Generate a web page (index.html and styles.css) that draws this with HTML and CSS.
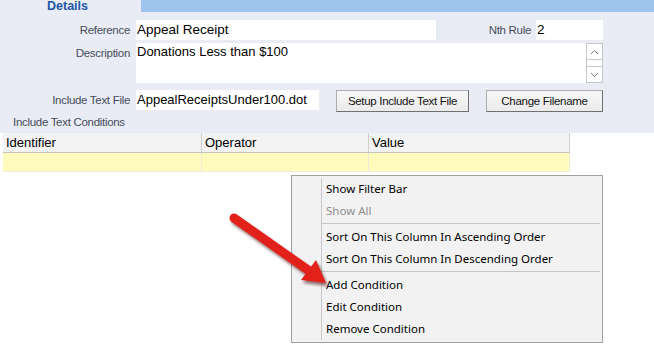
FILE: index.html
```html
<!DOCTYPE html>
<html lang="en">

<head>
    <meta charset="UTF-8" />
    <title>Details</title>
    <link rel="stylesheet" href="styles.css">
</head>

<body>
    <div class="panel">
        <div class="tabbar">
            <div class="tab">Details</div>
            <div class="tabline"></div>
        </div>

        <div class="row row-ref">
            <label class="lbl">Reference</label>
            <div class="field f-ref">Appeal Receipt</div>
            <label class="lbl lbl-nth">Nth Rule</label>
            <div class="field f-nth">2</div>
        </div>

        <div class="row row-desc">
            <label class="lbl">Description</label>
            <div class="field f-desc">
                <span>Donations Less than $100</span>
                <div class="scroll">
                    <div class="sbtn">
                        <svg width="9" height="6" viewBox="0 0 9 6"><path d="M1 5 L4.5 1.5 L8 5" fill="none" stroke="#7a7a7a" stroke-width="1" /></svg>
                    </div>
                    <div class="strack"></div>
                    <div class="sbtn">
                        <svg width="9" height="6" viewBox="0 0 9 6"><path d="M1 1 L4.5 4.5 L8 1" fill="none" stroke="#7a7a7a" stroke-width="1" /></svg>
                    </div>
                </div>
            </div>
        </div>

        <div class="row row-file">
            <label class="lbl">Include Text File</label>
            <div class="field f-file">AppealReceiptsUnder100.dot</div>
            <button class="btn btn-setup">Setup Include Text File</button>
            <button class="btn btn-change">Change Filename</button>
        </div>

        <div class="section">Include Text Conditions</div>
    </div>

    <div class="grid">
        <div class="grid-head">
            <div class="col c1">Identifier</div>
            <div class="col c2">Operator</div>
            <div class="col c3">Value</div>
        </div>
        <div class="grid-row">
            <div class="col c1"></div>
            <div class="col c2"></div>
            <div class="col c3"></div>
        </div>
    </div>

    <!-- context menu -->
    <div class="menu">
        <div class="item">Show Filter Bar</div>
        <div class="item disabled">Show All</div>
        <div class="sep"></div>
        <div class="item">Sort On This Column In Ascending Order</div>
        <div class="item">Sort On This Column In Descending Order</div>
        <div class="sep"></div>
        <div class="item">Add Condition</div>
        <div class="item">Edit Condition</div>
        <div class="item">Remove Condition</div>
    </div>

    <svg class="arrow" width="120" height="90" viewBox="220 205 120 90">
        <defs>
            <filter id="blur" x="-20%" y="-20%" width="140%" height="140%">
                <feGaussianBlur stdDeviation="1.5" />
            </filter>
        </defs>
        <g transform="translate(2 3)" opacity="0.55" filter="url(#blur)">
            <line x1="234" y1="218" x2="308" y2="270" stroke="#400" stroke-width="9" stroke-linecap="round" />
            <polygon points="326,283 301,280 316,260" fill="#400" />
        </g>
        <line x1="234" y1="218" x2="308" y2="270" stroke="#e3211b" stroke-width="9" stroke-linecap="round" />
        <polygon points="326,283 301,280 316,260" fill="#e3211b" />
    </svg>
</body>

</html>
```

FILE: styles.css
```css
* {
    box-sizing: border-box;
}

html,
body {
    margin: 0;
    padding: 0;
    background: #fff;
    font-family: 'Liberation Sans', Arial, sans-serif;
}

body {
    position: relative;
    width: 654px;
    height: 348px;
    overflow: hidden;
}

.panel {
    background: #e9ecf4;
    height: 133px;
}

.tabbar {
    display: flex;
    height: 12px;
}

.tab {
    width: 141px;
    padding-left: 47px;
    font-size: 12.5px;
    font-weight: bold;
    color: #2257a8;
    line-height: 13px;
}

.tabline {
    flex: 1;
    background: #9fc5ef;
}

.row {
    display: flex;
    align-items: flex-start;
}

.lbl {
    width: 130px;
    text-align: right;
    font-size: 11.5px;
    color: #474c5c;
    letter-spacing: -0.3px;
    line-height: 20px;
    margin-right: 6px;
}

.field {
    background: #fff;
    height: 20px;
    font-size: 13.5px;
    line-height: 20px;
    color: #000;
    padding-left: 1px;
}

.row-ref {
    margin-top: 8px;
}

.f-ref {
    width: 300px;
}

.lbl-nth {
    width: 95px;
    margin-right: 5px;
}

.f-nth {
    width: 67px;
}

.row-desc {
    margin-top: 3px;
}

.f-desc {
    width: 467px;
    height: 40px;
    display: flex;
    justify-content: space-between;
    font-size: 13px;
}

.f-desc span {
    line-height: 18px;
}

.scroll {
    width: 17px;
    height: 40px;
    display: flex;
    flex-direction: column;
}

.sbtn {
    height: 17px;
    border: 1px solid #c8c8c8;
    background: #fff;
    display: flex;
    align-items: center;
    justify-content: center;
}

.strack {
    flex: 1;
    border-left: 1px solid #c8c8c8;
    border-right: 1px solid #c8c8c8;
}

.row-file {
    margin-top: 7px;
}

.f-file {
    width: 183px;
    font-size: 13px;
}

.btn {
    height: 22px;
    font-family: 'Liberation Sans', Arial, sans-serif;
    font-size: 11.5px;
    letter-spacing: -0.3px;
    color: #111;
    background: linear-gradient(#f7f7f7, #ebebeb);
    border: 1px solid #adadad;
    border-right-color: #707070;
    border-bottom-color: #707070;
    padding: 0;
}

.btn-setup {
    width: 133px;
    margin-left: 17px;
}

.btn-change {
    width: 117px;
    margin-left: 17px;
}

.section {
    font-size: 11.5px;
    letter-spacing: -0.3px;
    color: #474c5c;
    padding-left: 13px;
    margin-top: 3px;
    line-height: 14px;
}

.grid {
    margin-left: 3px;
    width: 567px;
}

.grid-head,
.grid-row {
    display: flex;
}

.grid-head {
    height: 20px;
    background: #f3f3f3;
    border-bottom: 1px solid #c4c4c4;
}

.grid-head .col {
    font-size: 13px;
    line-height: 19px;
    padding-left: 3px;
    color: #000;
    border-right: 1px solid #cfcfcf;
}

.grid-row {
    height: 19px;
    background: #fffbbd;
    border-bottom: 1px solid #ececd8;
}

.grid-row .col {
    border-right: 1px solid #ececd8;
}

.c1 {
    width: 199px;
}

.c2 {
    width: 167px;
}

.c3 {
    flex: 1;
}

/* context menu */
.menu {
    position: absolute;
    left: 291px;
    top: 175px;
    width: 312px;
    height: 168px;
    background: #f2f2f2;
    border: 1px solid #a0a0a0;
    padding: 2px 2px 2px 0;
    font-family: 'Noto Sans', 'Open Sans', sans-serif;
    font-size: 11.5px;
    color: #000;
}

.menu::before {
    content: '';
    position: absolute;
    left: 29px;
    top: 2px;
    bottom: 2px;
    border-left: 1px solid #c8c8c8;
}

.item {
    height: 22px;
    line-height: 22px;
    padding-left: 34px;
}

.item.disabled {
    color: #8e8e8e;
}

.sep {
    height: 3px;
    margin: 1px 0 0 30px;
    border-top: 1px solid #c4c4c4;
}

.arrow {
    position: absolute;
    left: 220px;
    top: 205px;
}
```
